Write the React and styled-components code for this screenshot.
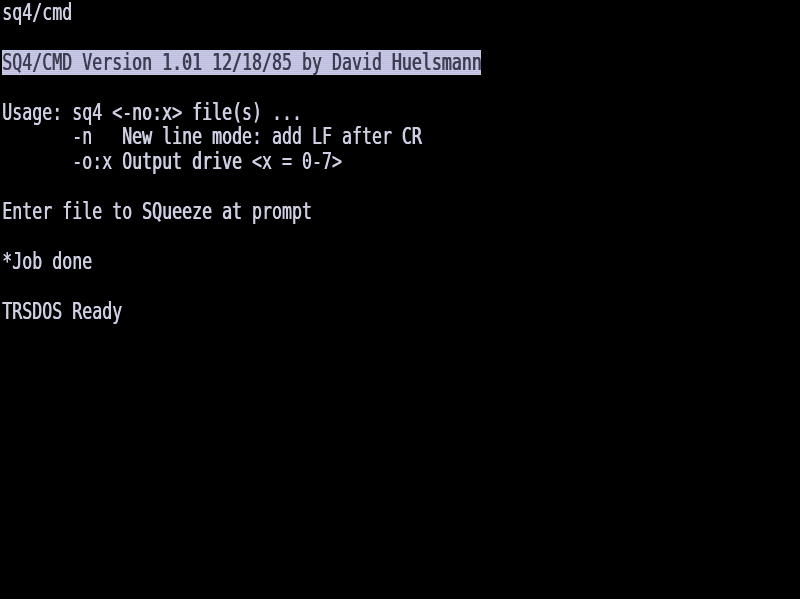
import React from "react";
import styled, { createGlobalStyle } from "styled-components";

const Global = createGlobalStyle`
  html, body { margin: 0; padding: 0; background: #000; }
  body { width: 800px; height: 599px; overflow: hidden; }
`;

const Screen = styled.div`
  width: 800px;
  height: 599px;
  box-sizing: border-box;
  padding: 1px 0 0 2px;
  background: #000;
  color: #cfcfe4;
  font-family: "DejaVu Sans Mono", "Liberation Mono", monospace;
  font-size: 16.6px;
  filter: blur(0.45px);
  display: flex;
  flex-direction: column;
  overflow: hidden;
`;

const Line = styled.div`
  height: 24.9px;
  line-height: 25px;
  white-space: pre;
  flex: none;
`;

const Glyphs = styled.span`
  display: inline-block;
  height: 25px;
  line-height: 25px;
  transform: scaleY(1.4);
  transform-origin: 0 16px;
  text-shadow: 0.6px 0 0 currentColor;
`;

const Highlight = styled.span`
  display: inline-block;
  height: 24px;
  width: 479px;
  margin-top: -1px;
  padding-top: 1px;
  background: repeating-linear-gradient(
    to bottom,
    #c9c9e8 0px,
    #c9c9e8 1px,
    #bdbddc 1px,
    #bdbddc 2px
  );
  color: #3e3e52;
`;

const lines = [
  { text: "sq4/cmd" },
  { text: "" },
  { text: "SQ4/CMD Version 1.01 12/18/85 by David Huelsmann", hl: true },
  { text: "" },
  { text: "Usage: sq4 <-no:x> file(s) ..." },
  { text: "       -n   New line mode: add LF after CR" },
  { text: "       -o:x Output drive <x = 0-7>" },
  { text: "" },
  { text: "Enter file to SQueeze at prompt" },
  { text: "" },
  { text: "*Job done" },
  { text: "" },
  { text: "TRSDOS Ready" },
];

export default function App() {
  return (
    <>
      <Global />
      <Screen>
        {lines.map((l, i) => (
          <Line key={i}>
            {l.hl ? (
              <Highlight>
                <Glyphs>{l.text}</Glyphs>
              </Highlight>
            ) : (
              <Glyphs>{l.text}</Glyphs>
            )}
          </Line>
        ))}
      </Screen>
    </>
  );
}
